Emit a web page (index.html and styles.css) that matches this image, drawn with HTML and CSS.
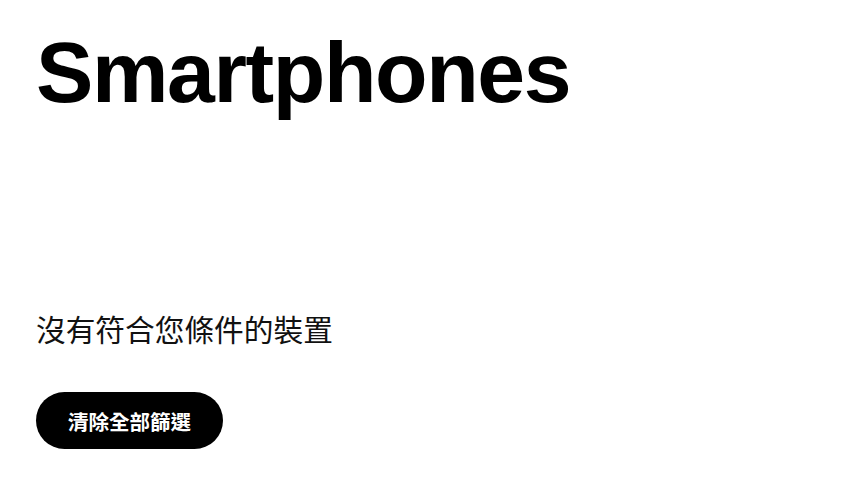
FILE: index.html
```html
<!DOCTYPE html>
<html lang="zh-Hant">
<head>
<meta charset="utf-8">
<link rel="stylesheet" href="styles.css">
</head>
<body>
<main class="page">
  <h1 class="title">Smartphones</h1>
  <section class="empty">
    <p class="empty-text">沒有符合您條件的裝置</p>
    <button class="clear-btn" type="button">清除全部篩選</button>
  </section>
</main>
</body>
</html>
```

FILE: styles.css
```css
html, body {
  margin: 0;
  padding: 0;
  background: #fff;
  color: #000;
}
.page {
  padding: 22px 36px 0;
  font-family: "Liberation Sans", "Noto Sans CJK TC", sans-serif;
}
.title {
  margin: 0;
  font-size: 86px;
  line-height: 100px;
  font-weight: 700;
  letter-spacing: -1.4px;
}
.empty {
  display: flex;
  flex-direction: column;
  align-items: flex-start;
  padding-top: 187px;
}
.empty-text {
  margin: 0;
  font-family: "Noto Sans CJK TC", sans-serif;
  font-size: 29.7px;
  line-height: 40px;
  font-weight: 400;
  color: #111;
}
.clear-btn {
  margin-top: 43px;
  height: 57px;
  padding: 0 32px;
  border: none;
  border-radius: 29px;
  background: #000;
  color: #fff;
  font-family: "Noto Sans CJK TC", sans-serif;
  font-size: 20.5px;
  font-weight: 700;
  cursor: pointer;
}
```
